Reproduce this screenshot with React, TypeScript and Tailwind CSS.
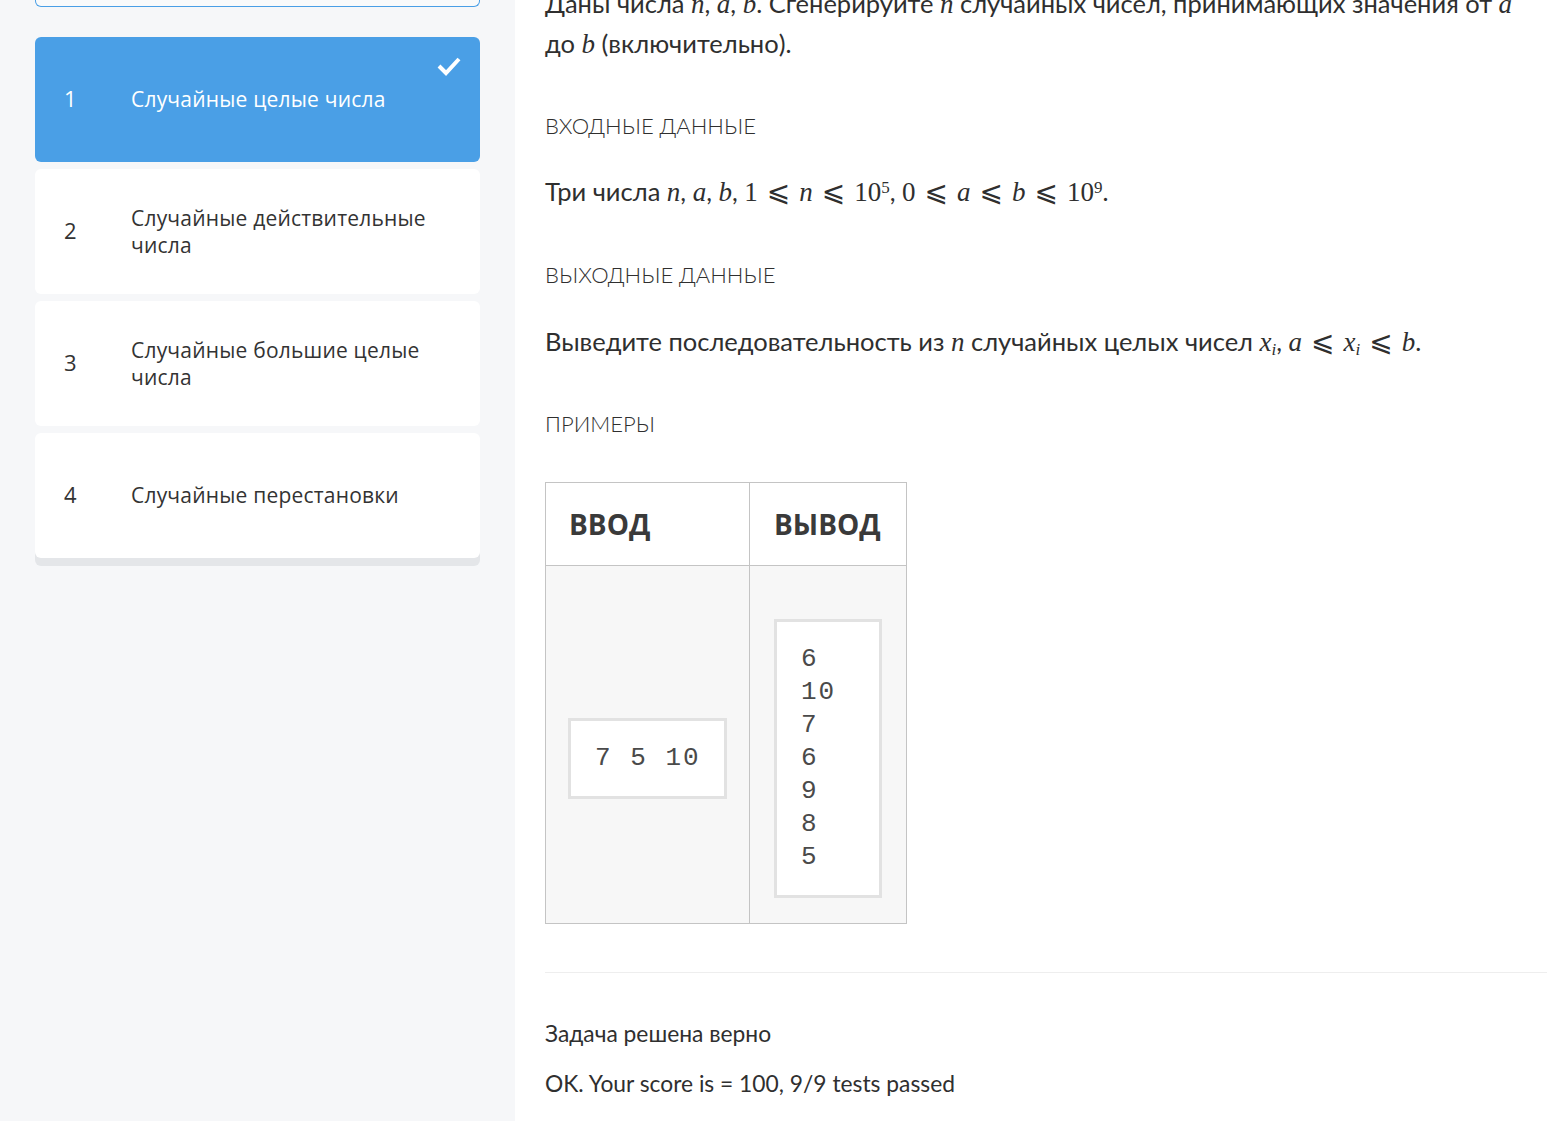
import React from "react";

const tasks = [
  { n: 1, lines: ["Случайные целые числа"], done: true },
  { n: 2, lines: ["Случайные действительные", "числа"] },
  { n: 3, lines: ["Случайные большие целые", "числа"] },
  { n: 4, lines: ["Случайные перестановки"] },
];

const V = ({ children }: { children: React.ReactNode }) => (
  <span className="font-['Liberation_Serif',serif] text-[27px] italic">{children}</span>
);
const N = ({ children }: { children: React.ReactNode }) => (
  <span className="font-['Liberation_Serif',serif] text-[27px]">{children}</span>
);
const Le = () => (
  <span className="mx-[9px] font-['DejaVu_Sans',serif] text-[28px] leading-none">⩽</span>
);

const Check = () => (
  <svg width="24" height="20" viewBox="0 0 24 20" className="absolute right-[19px] top-[19px]">
    <polyline points="2,10 9,17 22,3" fill="none" stroke="white" strokeWidth="4" />
  </svg>
);

const TaskCard = ({ n, lines, done }: { n: number; lines: string[]; done?: boolean }) => (
  <div
    className={
      "relative flex min-h-[125px] items-center rounded-md pl-[29px] text-[21px] leading-[27px] tracking-[0.2px] " +
      (done ? "bg-[#4a9fe6] text-white" : "bg-white text-[#333]") +
      (n === 4 ? " shadow-[0_8px_0_0_#e4e6e9]" : "")
    }
  >
    <span className="w-[67px] shrink-0 -mt-[2px] text-[22px]">{n}</span>
    <span>
      {lines.map((l, i) => (
        <div key={i}>{l}</div>
      ))}
    </span>
    {done && <Check />}
  </div>
);

export default function App() {
  return (
    <div className="flex min-h-screen bg-white text-[#2f2f2f] font-['Lato',sans-serif]">
      <aside className="w-[515px] shrink-0 bg-[#f6f7f9] px-[35px] font-['Open_Sans',sans-serif]">
        <div className="h-[7px] rounded-b-md border border-t-0 border-[#4a9fe6] bg-[#f9fafb]" />
        <div className="mt-[30px] flex flex-col gap-[7px]">
          {tasks.map((t) => (
            <TaskCard key={t.n} {...t} />
          ))}
        </div>
      </aside>

      <main className="min-w-0 flex-1 pl-[30px] text-[25.5px]">
        <p className="-mt-[16px] whitespace-nowrap leading-[39px]">
          Даны числа <V>n</V>, <V>a</V>, <V>b</V>. Сгенерируйте <V>n</V> случайных чисел, принимающих значения от <V>a</V>
          <br />
          до <V>b</V> (включительно).
        </p>

        <h3 className="mt-[45px] text-[22px] font-light uppercase">Входные данные</h3>
        <p className="mt-[30px] whitespace-nowrap leading-[39px]">
          Три числа <V>n</V>, <V>a</V>, <V>b</V>, <N>1</N>
          <Le />
          <V>n</V>
          <Le />
          <N>
            10<sup className="text-[17px]">5</sup>
          </N>
          , <N>0</N>
          <Le />
          <V>a</V>
          <Le />
          <V>b</V>
          <Le />
          <N>
            10<sup className="text-[17px]">9</sup>
          </N>
          .
        </p>

        <h3 className="mt-[46px] text-[22px] font-light uppercase">Выходные данные</h3>
        <p className="mt-[31px] whitespace-nowrap leading-[39px]">
          Выведите последовательность из <V>n</V> случайных целых чисел{" "}
          <V>
            x<sub className="text-[17px]">i</sub>
          </V>
          , <V>a</V>
          <Le />
          <V>
            x<sub className="text-[17px]">i</sub>
          </V>
          <Le />
          <V>b</V>.
        </p>

        <h3 className="mt-[45px] text-[22px] font-light uppercase">Примеры</h3>

        <table className="mt-[42px] border-collapse">
          <thead>
            <tr className="bg-white">
              <th className="h-[83px] border border-[#c4c4c4] px-[23px] text-left font-['Open_Sans',sans-serif] text-[28px] font-bold text-[#3a3a3a]">
                ВВОД
              </th>
              <th className="h-[83px] border border-[#c4c4c4] px-[24px] text-left font-['Open_Sans',sans-serif] text-[28px] font-bold text-[#3a3a3a]">
                ВЫВОД
              </th>
            </tr>
          </thead>
          <tbody>
            <tr className="bg-[#f7f7f7]">
              <td className="border border-[#c4c4c4] px-[22px] py-[25px] align-middle">
                <pre className="mt-[28px] w-[159px] border-[3px] border-[#e2e2e2] bg-white px-[24px] py-[21px] font-['Liberation_Mono',monospace] text-[26px] leading-[33px] tracking-[2px] text-[#4a4a4a]">
                  7 5 10
                </pre>
              </td>
              <td className="border border-[#c4c4c4] px-[24px] py-[25px] align-middle">
                <pre className="mt-[28px] w-[108px] border-[3px] border-[#e2e2e2] bg-white px-[24px] py-[21px] font-['Liberation_Mono',monospace] text-[26px] leading-[33px] tracking-[2px] text-[#4a4a4a]">
                  {"6\n10\n7\n6\n9\n8\n5"}
                </pre>
              </td>
            </tr>
          </tbody>
        </table>

        <div className="mt-[48px] border-t border-[#eeeeee] pt-[46px] text-[22.8px]">
          <p className="leading-[28px]">Задача решена верно</p>
          <p className="mt-[22px] leading-[28px]">OK. Your score is = 100, 9/9 tests passed</p>
        </div>
      </main>
    </div>
  );
}
